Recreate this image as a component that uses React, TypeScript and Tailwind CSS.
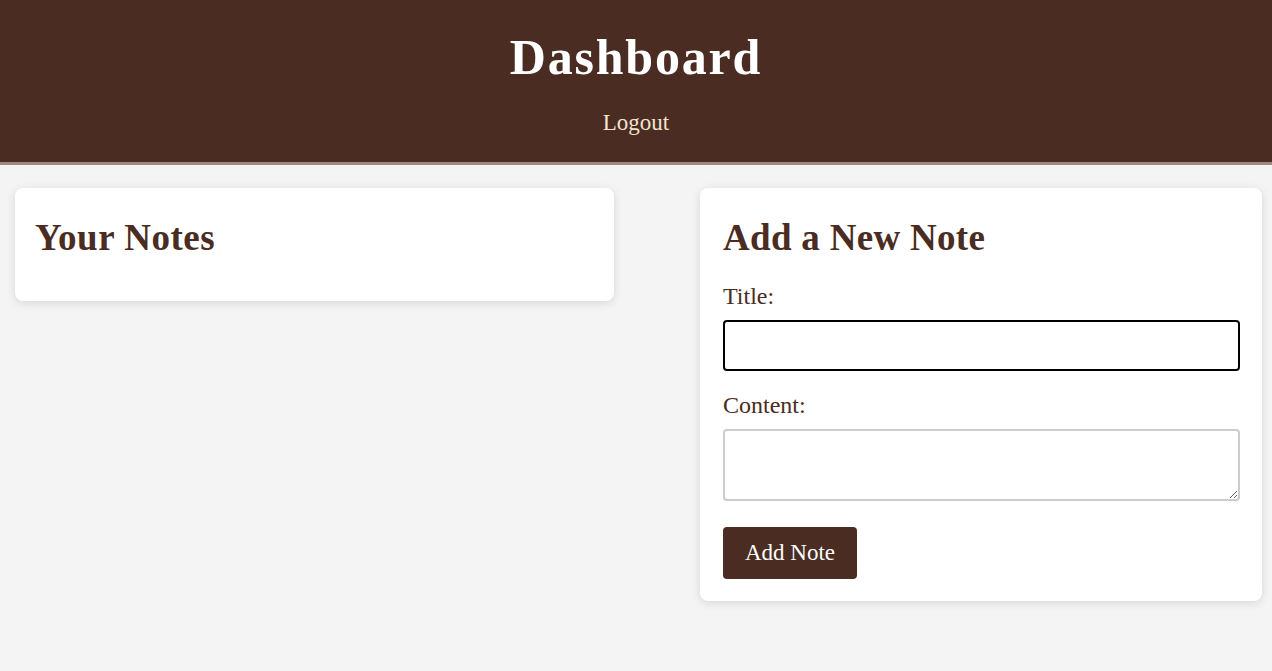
import React from "react";

function Header() {
  return (
    <header className="bg-[#4a2c22] border-b-[3px] border-[#a1887f] flex flex-col items-center pt-[32px] pb-[28px]">
      <h1 className="text-[50px] leading-none font-bold text-white tracking-[1.8px]">Dashboard</h1>
      <a href="#" className="mt-[29px] text-[23px] leading-none text-[#f3e3cf]">
        Logout
      </a>
    </header>
  );
}

function NotesList() {
  return (
    <section className="w-[599px] bg-white rounded-lg shadow-[0_2px_10px_rgba(0,0,0,0.12)] px-5 pt-[31px] pb-[45px]">
      <h2 className="text-[37px] leading-none font-bold text-[#4a2c22] tracking-[0.5px]">Your Notes</h2>
    </section>
  );
}

function NoteForm() {
  return (
    <section className="w-[562px] bg-white rounded-lg shadow-[0_2px_10px_rgba(0,0,0,0.12)] pl-[23px] pr-[22px] pt-[31px] pb-[22px]">
      <h2 className="text-[37px] leading-none font-bold text-[#4a2c22] tracking-[0.3px]">Add a New Note</h2>
      <form className="flex flex-col" onSubmit={(e) => e.preventDefault()}>
        <label className="mt-[28px] text-[24px] leading-none text-[#4a2c22]">Title:</label>
        <input
          type="text"
          className="mt-[12px] h-[51px] w-full border-2 border-black rounded-[4px] px-2 text-[18px] outline-none"
        />
        <label className="mt-[22px] text-[24px] leading-none text-[#4a2c22]">Content:</label>
        <textarea className="mt-[12px] h-[72px] w-full border-2 border-[#cccccc] rounded-[4px] px-2 py-1 text-[18px] outline-none resize-y" />
        <button
          type="submit"
          className="mt-[26px] self-start h-[52px] px-[22px] bg-[#4a2c22] text-white text-[23px] rounded-[4px]"
        >
          Add Note
        </button>
      </form>
    </section>
  );
}

export default function App() {
  return (
    <div className="min-h-[671px] bg-[#f4f4f4] font-['Liberation_Serif',serif]">
      <Header />
      <main className="flex items-start justify-between pl-[15px] pr-[10px] pt-[23px]">
        <NotesList />
        <NoteForm />
      </main>
    </div>
  );
}
